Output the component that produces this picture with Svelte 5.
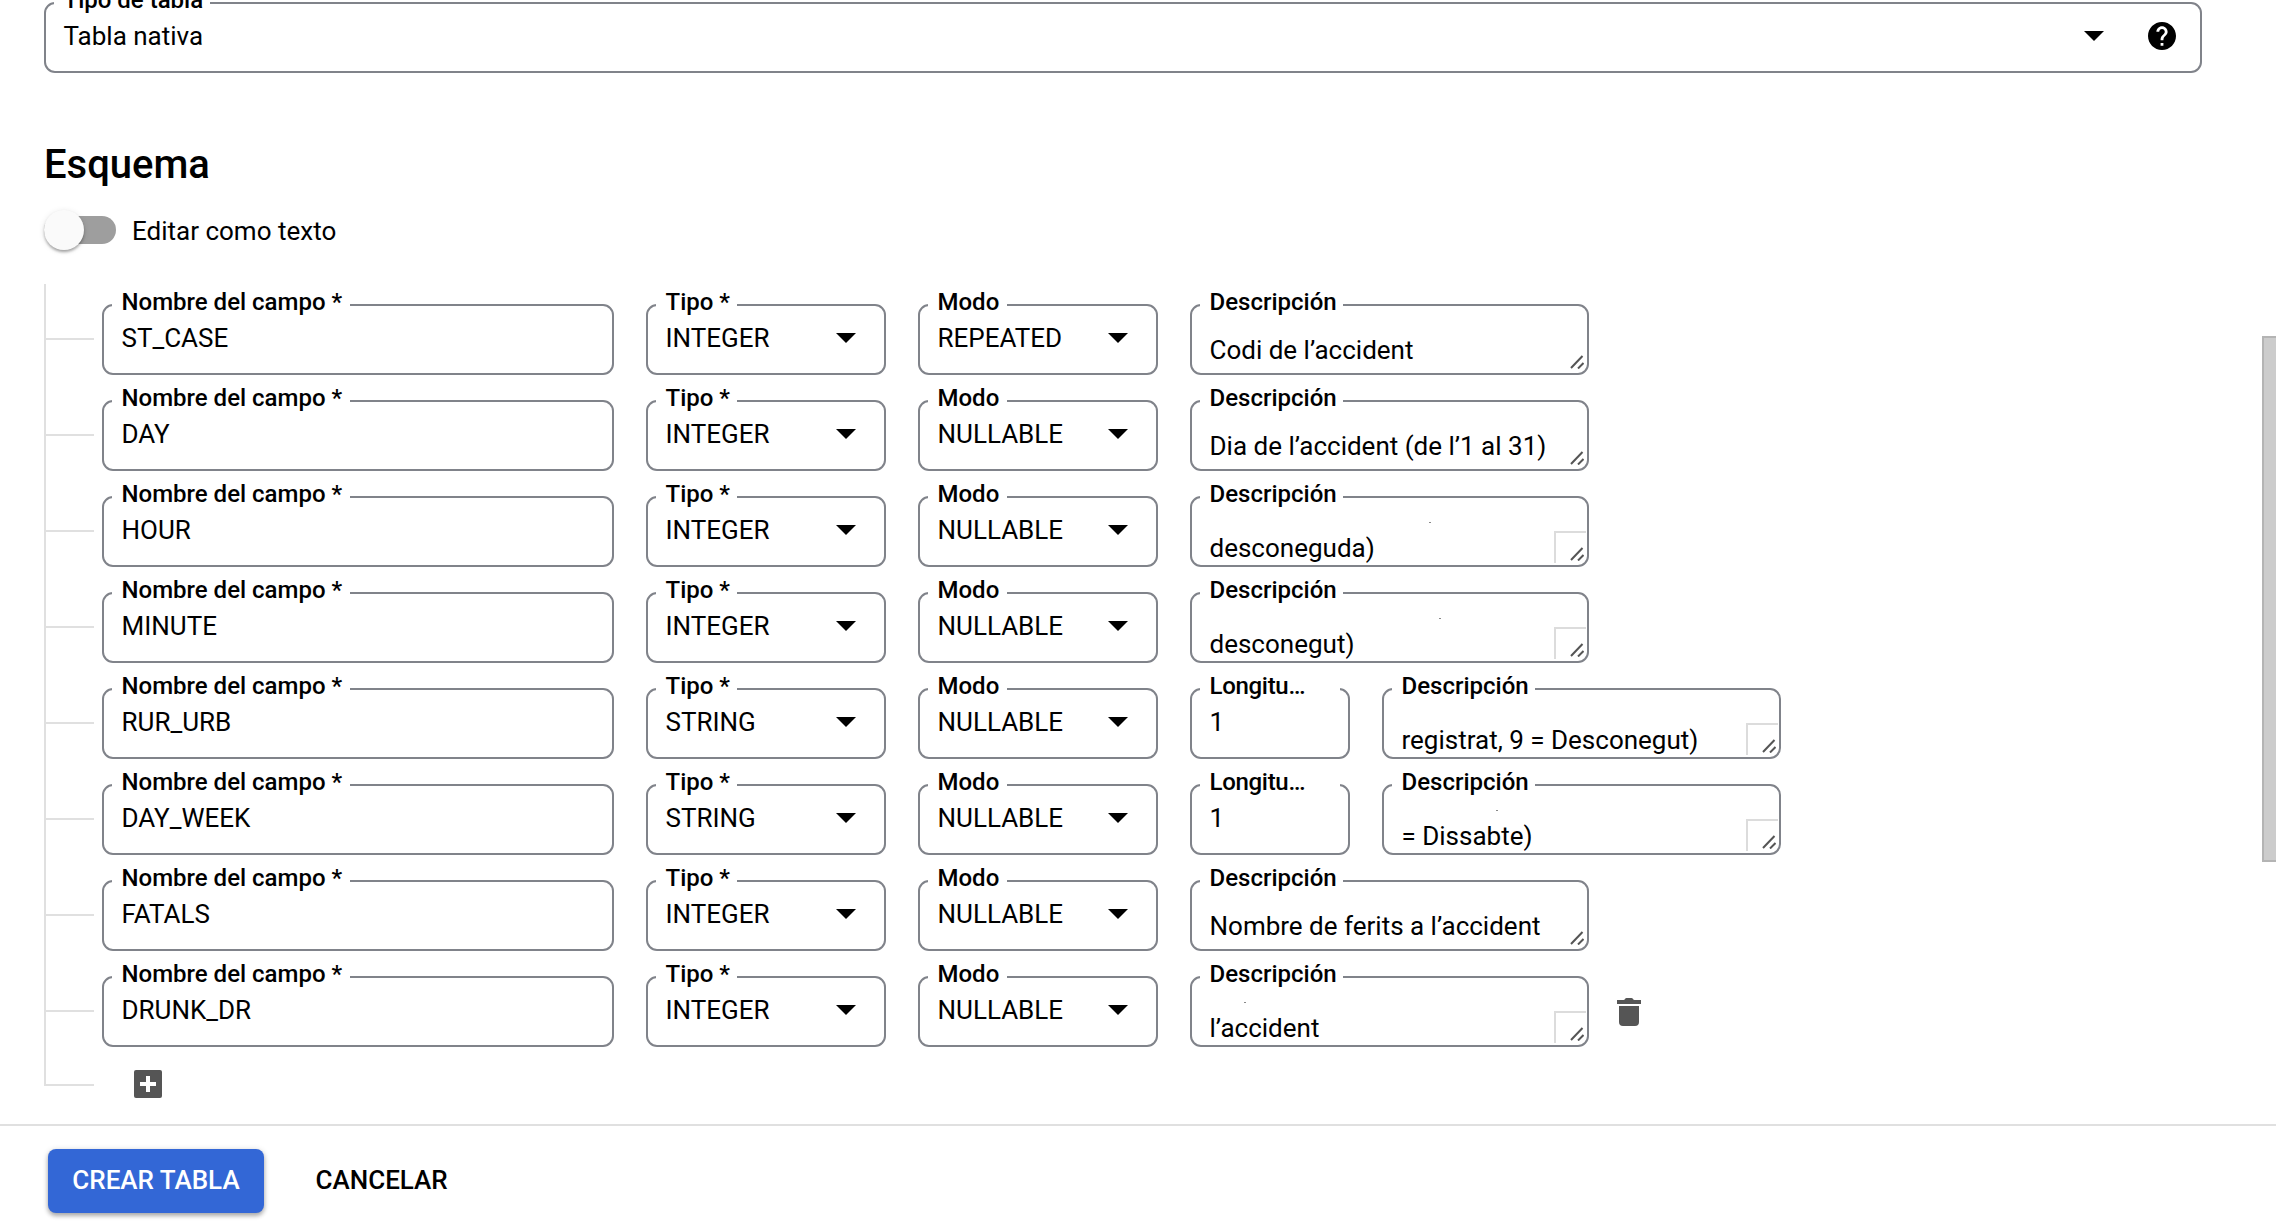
<script>
  const fields = [
    { name: 'ST_CASE', type: 'INTEGER', mode: 'REPEATED', text: 'Codi de l’accident' },
    { name: 'DAY', type: 'INTEGER', mode: 'NULLABLE', text: 'Dia de l’accident (de l’1 al 31)' },
    { name: 'HOUR', type: 'INTEGER', mode: 'NULLABLE', text: 'desconeguda)', scrolled: true, tail: 237 },
    { name: 'MINUTE', type: 'INTEGER', mode: 'NULLABLE', text: 'desconegut)', scrolled: true, tail: 247 },
    { name: 'RUR_URB', type: 'STRING', mode: 'NULLABLE', length: '1', text: 'registrat, 9 = Desconegut)', scrolled: true },
    { name: 'DAY_WEEK', type: 'STRING', mode: 'NULLABLE', length: '1', text: '= Dissabte)', scrolled: true, tail: 112 },
    { name: 'FATALS', type: 'INTEGER', mode: 'NULLABLE', text: 'Nombre de ferits a l’accident' },
    { name: 'DRUNK_DR', type: 'INTEGER', mode: 'NULLABLE', text: 'l’accident', scrolled: true, tail: 52, removable: true },
  ];
</script>

{#snippet arrow()}
  <svg class="arrow" viewBox="0 0 20 10"><path d="M0 0h20L10 10z" /></svg>
{/snippet}

<div class="page">
  <main>
    <div class="box table-type">
      <span class="label l-table">Tipo de tabla</span>
      <span class="value">Tabla nativa</span>
      {@render arrow()}
      <svg class="help" viewBox="2 2 20 20">
        <path d="M12 2C6.48 2 2 6.48 2 12s4.48 10 10 10 10-4.48 10-10S17.52 2 12 2zm1 17h-2v-2h2v2zm2.07-7.75l-.9.92C13.45 12.9 13 13.5 13 15h-2v-.5c0-1.1.45-2.1 1.17-2.83l1.24-1.26c.37-.36.59-.86.59-1.41 0-1.1-.9-2-2-2s-2 .9-2 2H8c0-2.21 1.79-4 4-4s4 1.79 4 4c0 .88-.36 1.68-.93 2.25z" />
      </svg>
    </div>

    <h2>Esquema</h2>

    <div class="toggle-row">
      <span class="track"><span class="thumb"></span></span>
      <span class="toggle-label">Editar como texto</span>
    </div>

    <div class="schema">
      {#each fields as f}
        <div class="row">
          <span class="branch"></span>
          <div class="box name">
            <span class="label l-name">Nombre del campo *</span>
            <span class="value">{f.name}</span>
          </div>
          <div class="box select">
            <span class="label l-type">Tipo *</span>
            <span class="value">{f.type}</span>
            {@render arrow()}
          </div>
          <div class="box select">
            <span class="label l-mode">Modo</span>
            <span class="value">{f.mode}</span>
            {@render arrow()}
          </div>
          {#if f.length}
            <div class="box length">
              <span class="label l-length">Longitu…</span>
              <span class="value">{f.length}</span>
            </div>
          {/if}
          <div class="box desc" class:scrolled={f.scrolled}>
            <span class="label l-desc">Descripción</span>
            <span class="value">{f.text}</span>
            {#if f.tail}<i class="tail" style="left: {f.tail}px"></i>{/if}
            {#if f.scrolled}<i class="corner"></i>{/if}
            <svg class="grip" viewBox="0 0 14 14"><path d="M1 13 12.500 1M8 13.500l5.500-5.500" /></svg>
          </div>
          {#if f.removable}
            <svg class="trash" viewBox="0 0 24 28">
              <path d="M0 2h6.500q1 0 1.500-1 .5-1 1.500-1h5q1 0 1.500 1t1.500 1H24v4H0zM2 8h20v16q0 4-4 4H6q-4 0-4-4z" />
            </svg>
          {/if}
        </div>
      {/each}
      <div class="add-row">
        <svg class="add" viewBox="0 0 28 28">
          <rect width="28" height="28" rx="2" />
          <path d="M12 6h4v6h6v4h-6v6h-4v-6H6v-4h6z" />
        </svg>
      </div>
    </div>
  </main>

  <footer>
    <button class="primary">CREAR TABLA</button>
    <button class="flat">CANCELAR</button>
  </footer>

  <div class="scrollbar"></div>
</div>

<style>
  :global(body) {
    margin: 0;
    background: #fff;
  }
  .page {
    position: relative;
    display: flex;
    flex-direction: column;
    width: 2276px;
    height: 1226px;
    overflow: hidden;
    box-sizing: border-box;
    font-family: Roboto, 'Liberation Sans', sans-serif;
    font-size: 26px;
    color: #000;
  }
  .page :global(*) {
    box-sizing: border-box;
  }
  main {
    height: 1124px;
    padding: 2px 0 0 44px;
  }
  svg {
    display: block;
    flex: none;
  }
  .box {
    position: relative;
    display: flex;
    flex: none;
    align-items: flex-start;
    height: 71px;
    padding: 16px 18px 0 17.5px;
    border: 2px solid #80838a;
    border-radius: 11px;
  }
  .value {
    flex: 1;
    line-height: 32px;
    white-space: nowrap;
  }
  .label {
    position: absolute;
    top: -18px;
    left: 8px;
    padding-left: 9.5px;
    background: #fff;
    font-size: 24px;
    font-weight: 500;
    line-height: 28px;
    white-space: nowrap;
  }
  .l-table { width: 156px; }
  .l-name { width: 238px; }
  .l-type { width: 81px; }
  .l-mode { width: 79px; }
  .l-desc { width: 143px; }
  .l-length {
    width: 140px;
    letter-spacing: -0.3px;
  }
  .arrow {
    width: 20px;
    height: 10px;
    margin-top: 11px;
  }
  .table-type {
    width: 2158px;
    padding-right: 24px;
  }
  .help {
    width: 28px;
    height: 28px;
    margin: 2px 0 0 44px;
  }
  h2 {
    margin: 68px 0 0;
    font-size: 40px;
    font-weight: 500;
    line-height: 48px;
  }
  .toggle-row {
    display: flex;
    align-items: center;
    gap: 16px;
    height: 40px;
    margin-top: 21px;
  }
  .track {
    width: 72px;
    height: 28px;
    border-radius: 14px;
    background: #9e9e9e;
  }
  .thumb {
    display: block;
    width: 40px;
    height: 40px;
    margin-top: -6px;
    border-radius: 50%;
    background: #fafafa;
    box-shadow: 0 3px 3px -1px rgba(0, 0, 0, 0.2), 0 2px 3px rgba(0, 0, 0, 0.16), 0 1px 6px rgba(0, 0, 0, 0.1);
  }
  .toggle-label {
    padding-top: 2px;
    line-height: 32px;
  }
  .schema {
    width: 1900px;
    height: 802px;
    margin-top: 34px;
    padding-top: 20px;
    border-left: 2px solid #e0e0e0;
  }
  .row {
    display: flex;
    gap: 32px;
    height: 96px;
  }
  .branch {
    width: 48px;
    height: 2px;
    margin: 34px -24px 0 0;
    background: #e0e0e0;
  }
  .name { width: 512px; }
  .select {
    width: 240px;
    padding-right: 28px;
  }
  .length { width: 160px; }
  .desc {
    width: 399px;
    padding-top: 28px;
  }
  .desc.scrolled {
    padding-top: 34px;
  }
  .grip {
    position: absolute;
    right: 3px;
    bottom: 4px;
    width: 14px;
    height: 14px;
    fill: none;
    stroke: #555;
    stroke-width: 2;
  }
  .corner {
    position: absolute;
    right: 1px;
    bottom: 2px;
    width: 32px;
    height: 32px;
    border-top: 2px solid #dcdcdc;
    border-left: 2px solid #dcdcdc;
  }
  .tail {
    position: absolute;
    top: 24px;
    width: 2px;
    height: 1px;
    background: #888;
  }
  .trash {
    width: 24px;
    height: 28px;
    margin: 22px 0 0 -4px;
    fill: #555;
  }
  .add-row {
    display: flex;
    width: 48px;
    height: 14px;
    border-bottom: 2px solid #e0e0e0;
  }
  .add {
    width: 28px;
    height: 28px;
    margin: -2px 0 0 88px;
    fill: #555;
  }
  .add path {
    fill: #fff;
  }
  footer {
    display: flex;
    align-items: flex-start;
    gap: 27.5px;
    height: 102px;
    padding: 23px 0 0 48px;
    border-top: 2px solid #e0e0e0;
  }
  button {
    height: 64px;
    padding: 0 24px 2px;
    border: 0;
    border-radius: 8px;
    background: none;
    color: #000;
    font: 500 26px/36px Roboto, 'Liberation Sans', sans-serif;
    white-space: nowrap;
  }
  .primary {
    width: 216px;
    background: #3367d6;
    color: #fff;
    box-shadow: 0 3px 4px rgba(0, 0, 0, 0.26), 0 1px 6px rgba(0, 0, 0, 0.16);
  }
  .scrollbar {
    position: absolute;
    top: 336px;
    right: 0;
    width: 14px;
    height: 526px;
    border: 2px solid #b4b4b4;
    border-right: 0;
    background: #ccc;
  }
</style>
